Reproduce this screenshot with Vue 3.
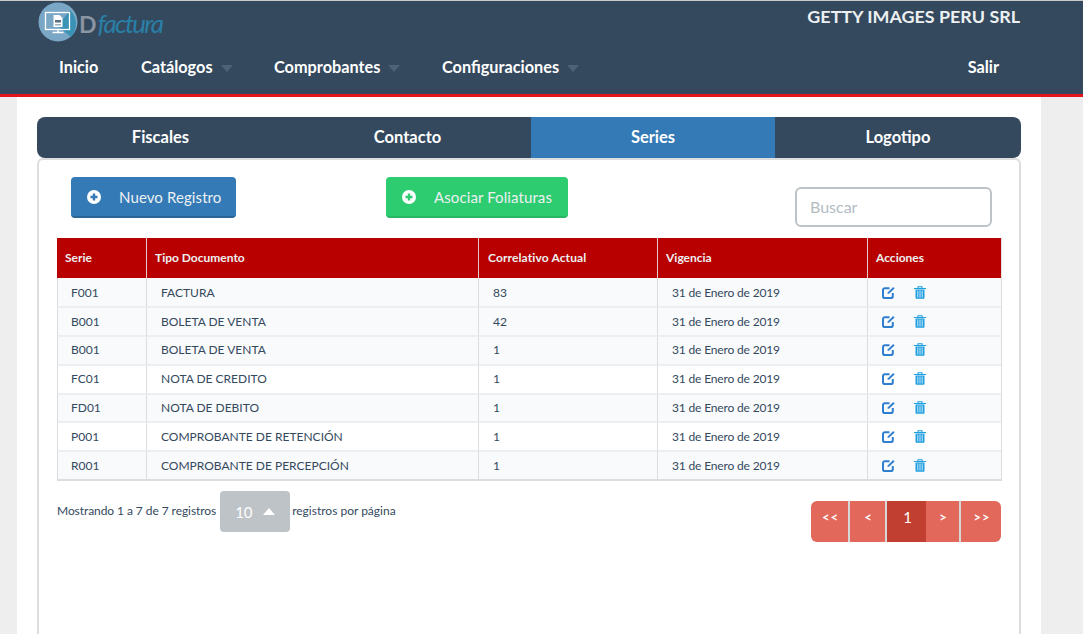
<script setup>
const columns = ['Serie', 'Tipo Documento', 'Correlativo Actual', 'Vigencia', 'Acciones']
const rows = [
  { serie: 'F001', tipo: 'FACTURA', num: 83 },
  { serie: 'B001', tipo: 'BOLETA DE VENTA', num: 42 },
  { serie: 'B001', tipo: 'BOLETA DE VENTA', num: 1 },
  { serie: 'FC01', tipo: 'NOTA DE CREDITO', num: 1 },
  { serie: 'FD01', tipo: 'NOTA DE DEBITO', num: 1 },
  { serie: 'P001', tipo: 'COMPROBANTE DE RETENCIÓN', num: 1 },
  { serie: 'R001', tipo: 'COMPROBANTE DE PERCEPCIÓN', num: 1 },
]
const tabs = ['Fiscales', 'Contacto', 'Series', 'Logotipo']
const menu = [
  { label: 'Inicio', caret: false, cls: 'm-inicio' },
  { label: 'Catálogos', caret: true, cls: 'm-cat' },
  { label: 'Comprobantes', caret: true, cls: 'm-comp' },
  { label: 'Configuraciones', caret: true, cls: 'm-conf' },
]
</script>

<template>
  <div class="page">
    <header class="header">
      <div class="top">
        <div class="brand">
          <svg class="logo" width="40" height="40" viewBox="0 0 40 40">
            <circle cx="20" cy="20" r="19.5" fill="#7ba7c7" />
            <path d="M32 8 A19.5 19.5 0 0 1 33 35 L20 24 Z" fill="#3a92b5" />
            <rect x="7.500" y="10.500" width="24" height="17" fill="none" stroke="#fff" stroke-width="1.300" />
            <path d="M20 27.500v2.500M14.500 30.500h11" stroke="#fff" stroke-width="1.500" fill="none" />
            <path d="M15.500 13h6l3 3v9h-9z" fill="#fff" />
            <rect x="17" y="18" width="6" height="2.500" fill="#5b6f82" />
            <rect x="17" y="22" width="6" height="1.500" fill="#9fb0bf" />
          </svg>
          <span class="d">D</span><span class="factura">factura</span>
        </div>
        <div class="company">GETTY IMAGES PERU SRL</div>
      </div>
      <nav class="nav">
        <a v-for="m in menu" :key="m.label" class="nav-item" :class="m.cls">
          {{ m.label }}<i v-if="m.caret" class="caret"></i>
        </a>
        <a class="nav-item salir">Salir</a>
      </nav>
    </header>

    <main class="container">
      <div class="tabs">
        <div v-for="t in tabs" :key="t" class="tab" :class="{ active: t === 'Series' }">{{ t }}</div>
      </div>
      <section class="card">
        <div class="toolbar">
          <button class="btn blue">
            <svg width="14" height="14" viewBox="0 0 14 14"><circle cx="7" cy="7" r="7" fill="#fff" /><path d="M7 3.500v7M3.500 7h7" stroke="currentColor" stroke-width="2.400" /></svg>
            <span>Nuevo Registro</span>
          </button>
          <button class="btn green">
            <svg width="14" height="14" viewBox="0 0 14 14"><circle cx="7" cy="7" r="7" fill="#fff" /><path d="M7 3.500v7M3.500 7h7" stroke="currentColor" stroke-width="2.400" /></svg>
            <span>Asociar Foliaturas</span>
          </button>
          <input class="search" placeholder="Buscar" />
        </div>

        <table class="grid">
          <colgroup>
            <col style="width: 90px" /><col style="width: 332px" /><col style="width: 179px" /><col style="width: 210px" /><col />
          </colgroup>
          <thead>
            <tr><th v-for="c in columns" :key="c">{{ c }}</th></tr>
          </thead>
          <tbody>
            <tr v-for="(r, i) in rows" :key="i" :class="{ plain: i === 3 || i === 5 }">
              <td>{{ r.serie }}</td>
              <td>{{ r.tipo }}</td>
              <td>{{ r.num }}</td>
              <td class="date">31 de Enero de 2019</td>
              <td>
                <div class="actions">
                  <svg width="14" height="13" viewBox="0 0 14 13" fill="none">
                    <path d="M7.500 2.200H2.800a1.800 1.800 0 0 0-1.800 1.800v6.200a1.800 1.800 0 0 0 1.800 1.800H9a1.800 1.800 0 0 0 1.800-1.800V7" stroke="#2f7fd1" stroke-width="2" />
                    <path d="M5.500 8l.4-1.800L11.200 1l1.400 1.400L7.300 7.600z" fill="#2f7fd1" />
                  </svg>
                  <svg width="12" height="13" viewBox="0 0 12 13" fill="none">
                    <path d="M0 2.500h12M4 2.500V.7h4v1.800" stroke="#1f9ee0" stroke-width="1.100" />
                    <path d="M1.500 3.500h9V12a.8.8 0 0 1-.8.800H2.300A.8.8 0 0 1 1.500 12z" fill="#1f9ee0" />
                    <path d="M3.800 4.500v7M6 4.500v7M8.200 4.500v7" stroke="#d8eefa" stroke-width=".9" />
                  </svg>
                </div>
              </td>
            </tr>
          </tbody>
        </table>

        <div class="foot">
          <div class="length">
            <span class="showing">Mostrando 1 a 7 de 7 registros</span>
            <div class="select">10<i class="up"></i></div>
            <span class="per-page">registros por página</span>
          </div>
          <div class="pager">
            <a class="pg w1">&lt;&lt;</a>
            <a class="pg w2">&lt;</a>
            <a class="pg cur">1</a>
            <a class="pg w3">&gt;</a>
            <a class="pg w4">&gt;&gt;</a>
          </div>
        </div>
      </section>
    </main>
  </div>
</template>

<style>
html, body { margin: 0; background: #eee; overflow: hidden; }
</style>

<style scoped>
.page { width: 1083px; height: 634px; overflow: hidden; font-family: Lato, "Liberation Sans", sans-serif; background: #eee; }
.header { box-sizing: border-box; height: 97px; background: #34495e; border-top: 1px solid #c9c9c9; border-bottom: 3px solid #e2141c; }
.top { display: flex; justify-content: space-between; height: 45px; padding: 1px 63px 0 38px; }
.brand { display: flex; align-items: flex-start; height: 40px; }
.logo { display: block; }
.d { margin: 4px 0 0 1px; font: 700 23px/36px Lato, sans-serif; color: #8a95a1; }
.factura { margin: 3px 0 0 1px; font: italic 400 26px/36px Lato, sans-serif; letter-spacing: -1.800px; color: #2a7fa6; }
.company { margin-top: 4px; color: #ecf0f1; font-size: 17.900px; line-height: 20px; font-weight: 700; }
.nav { display: flex; align-items: center; height: 39px; padding: 0 84px 0 59px; color: #fff; font-size: 16.300px; font-weight: 700; }
.nav-item { display: flex; align-items: center; white-space: nowrap; }
.m-inicio { width: 82px; }
.m-cat { width: 133px; }
.m-comp { width: 168px; }
.salir { margin-left: auto; }
.caret { margin-left: 8px; margin-top: 4px; border: 6px solid transparent; border-top: 7px solid #4d6277; border-bottom: 0; }

.container { box-sizing: border-box; width: 1024px; height: 537px; margin-left: 17px; padding: 20px 20px 0; background: #fff; }
.tabs { display: grid; grid-template-columns: 247px 247px 244px 246px; height: 41px; border-radius: 8px; overflow: hidden; background: #34495e; }
.tab { box-sizing: border-box; display: flex; align-items: center; justify-content: center; padding-bottom: 2px; color: #fff; font-size: 16.500px; font-weight: 700; }
.tab.active { background: #337ab7; }
.card { box-sizing: border-box; height: 500px; padding: 17px 18px 0; border: 2px solid #ddd; border-bottom: 0; border-radius: 6px 6px 0 0; }
.toolbar { display: flex; align-items: flex-start; height: 61px; padding-left: 14px; }
.btn { box-sizing: border-box; display: flex; align-items: center; height: 41px; padding: 0 0 0 16px; border: 0; border-bottom: 2px solid; border-radius: 4px; font: 400 15px Lato, sans-serif; letter-spacing: .1px; }
.btn span { margin-left: 18px; color: #ecf0f1; }
.btn.blue { width: 165px; background: #337ab7; color: #337ab7; border-color: #2a6496; }
.btn.green { width: 182px; margin-left: 150px; background: #2ecc71; color: #2ecc71; border-color: #29b765; }
.search { box-sizing: border-box; width: 197px; height: 40px; margin: 10px 0 0 227px; padding: 0 13px 2px; border: 2px solid #bdc3c7; border-radius: 6px; outline: 0; background: #fff; font: 400 16px Lato, sans-serif; }
.search::placeholder { color: #b4bcc2; opacity: 1; }

.grid { width: 945px; table-layout: fixed; border-collapse: separate; border-spacing: 0; border-right: 1px solid #ddd; font-size: 12px; color: #34495e; }
.grid th { box-sizing: border-box; height: 40px; padding: 0 8px 2px; background: #b90000; border-right: 1px solid #e8c9c9; color: #ecf0f1; font-size: 12px; font-weight: 700; text-align: left; }
.grid th:nth-child(3) { padding-left: 9px; letter-spacing: .12px; }
.grid th:last-child { border-right: 0; }
.grid tbody tr { height: 29px; }
.grid tbody tr:first-child { height: 30px; }
.grid tbody tr:nth-child(5) { height: 28px; }
.grid td { box-sizing: border-box; padding: 0 14px; background: #f9fafb; border-bottom: 2px solid #eceeef; border-right: 1px solid #ddd; }
.grid td:first-child { border-left: 1px solid #ddd; padding-left: 13px; }
.grid td:last-child { border-right: 0; padding: 0 0 0 14px; }
.grid tbody tr:nth-child(n+3):nth-child(-n+5) td { padding-bottom: 2px; }
.grid td.date { letter-spacing: -.16px; }
.grid tr.plain td { background: #fff; }
.grid tr:last-child td { border-bottom-color: #ddd; }
.actions { display: flex; align-items: center; gap: 18px; }
.actions svg { display: block; }

.foot { display: flex; justify-content: space-between; align-items: flex-start; width: 944px; margin-top: 10px; }
.length { display: flex; align-items: center; gap: 4px; height: 41px; font-size: 12px; color: #34495e; }
.showing, .per-page { padding-bottom: 2px; }
.showing { letter-spacing: -.07px; }
.per-page { margin-left: -2px; }
.select { box-sizing: border-box; display: flex; align-items: center; width: 70px; height: 41px; flex: none; padding-left: 15px; border-radius: 4px; background: #bdc3c7; color: #fff; font-size: 15px; }
.up { margin-left: 10px; border: 6px solid transparent; border-bottom: 7px solid #fff; border-top: 0; }
.pager { display: flex; height: 41px; margin-top: 10px; border-radius: 6px; overflow: hidden; font-size: 13px; font-weight: 700; letter-spacing: 1px; color: #fff; }
.pg { box-sizing: border-box; display: flex; align-items: center; justify-content: center; padding: 0 0 9px 2px; background: #e2685c; }
.w1 { width: 39px; border-right: 2px solid #d7d7d7; }
.w2 { width: 37px; border-right: 2px solid #d7d7d7; }
.cur { width: 39px; background: #c13f30; font-size: 15px; font-weight: 400; letter-spacing: 0; }
.w3 { width: 35px; border-right: 2px solid #d7d7d7; }
.w4 { width: 40px; }
</style>
